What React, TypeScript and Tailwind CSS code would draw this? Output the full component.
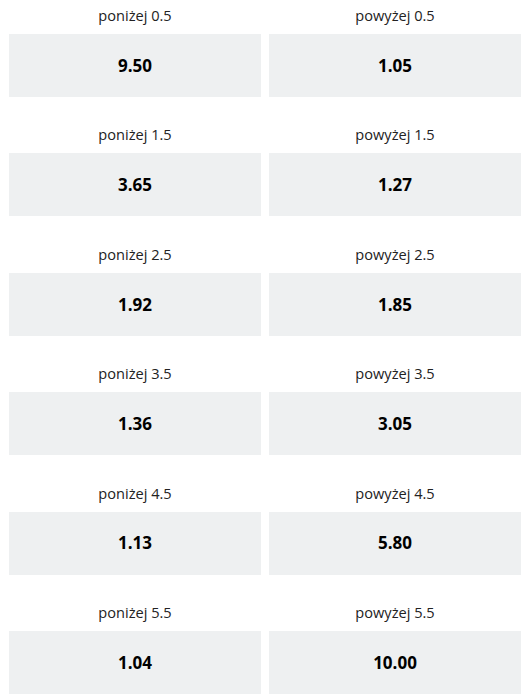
import { Fragment } from 'react';

const rows = [
  { under: '9.50', over: '1.05', line: '0.5' },
  { under: '3.65', over: '1.27', line: '1.5' },
  { under: '1.92', over: '1.85', line: '2.5' },
  { under: '1.36', over: '3.05', line: '3.5' },
  { under: '1.13', over: '5.80', line: '4.5' },
  { under: '1.04', over: '10.00', line: '5.5' },
];

function OddCell({ label, odd }: { label: string; odd: string }) {
  return (
    <div className="mb-[22.4px]">
      <div className="h-[34px] pt-[5px] text-center text-[14.6px] leading-5 text-[#222]">{label}</div>
      <div className="flex h-[63px] items-center justify-center bg-[#eef0f1] text-[17px] font-bold text-black">
        {odd}
      </div>
    </div>
  );
}

export default function App() {
  return (
    <div className="bg-white px-[9px] font-['Open_Sans',sans-serif]">
      <div className="grid grid-cols-2 gap-x-2">
        {rows.map((r) => (
          <Fragment key={r.line}>
            <OddCell label={`poniżej ${r.line}`} odd={r.under} />
            <OddCell label={`powyżej ${r.line}`} odd={r.over} />
          </Fragment>
        ))}
      </div>
    </div>
  );
}
